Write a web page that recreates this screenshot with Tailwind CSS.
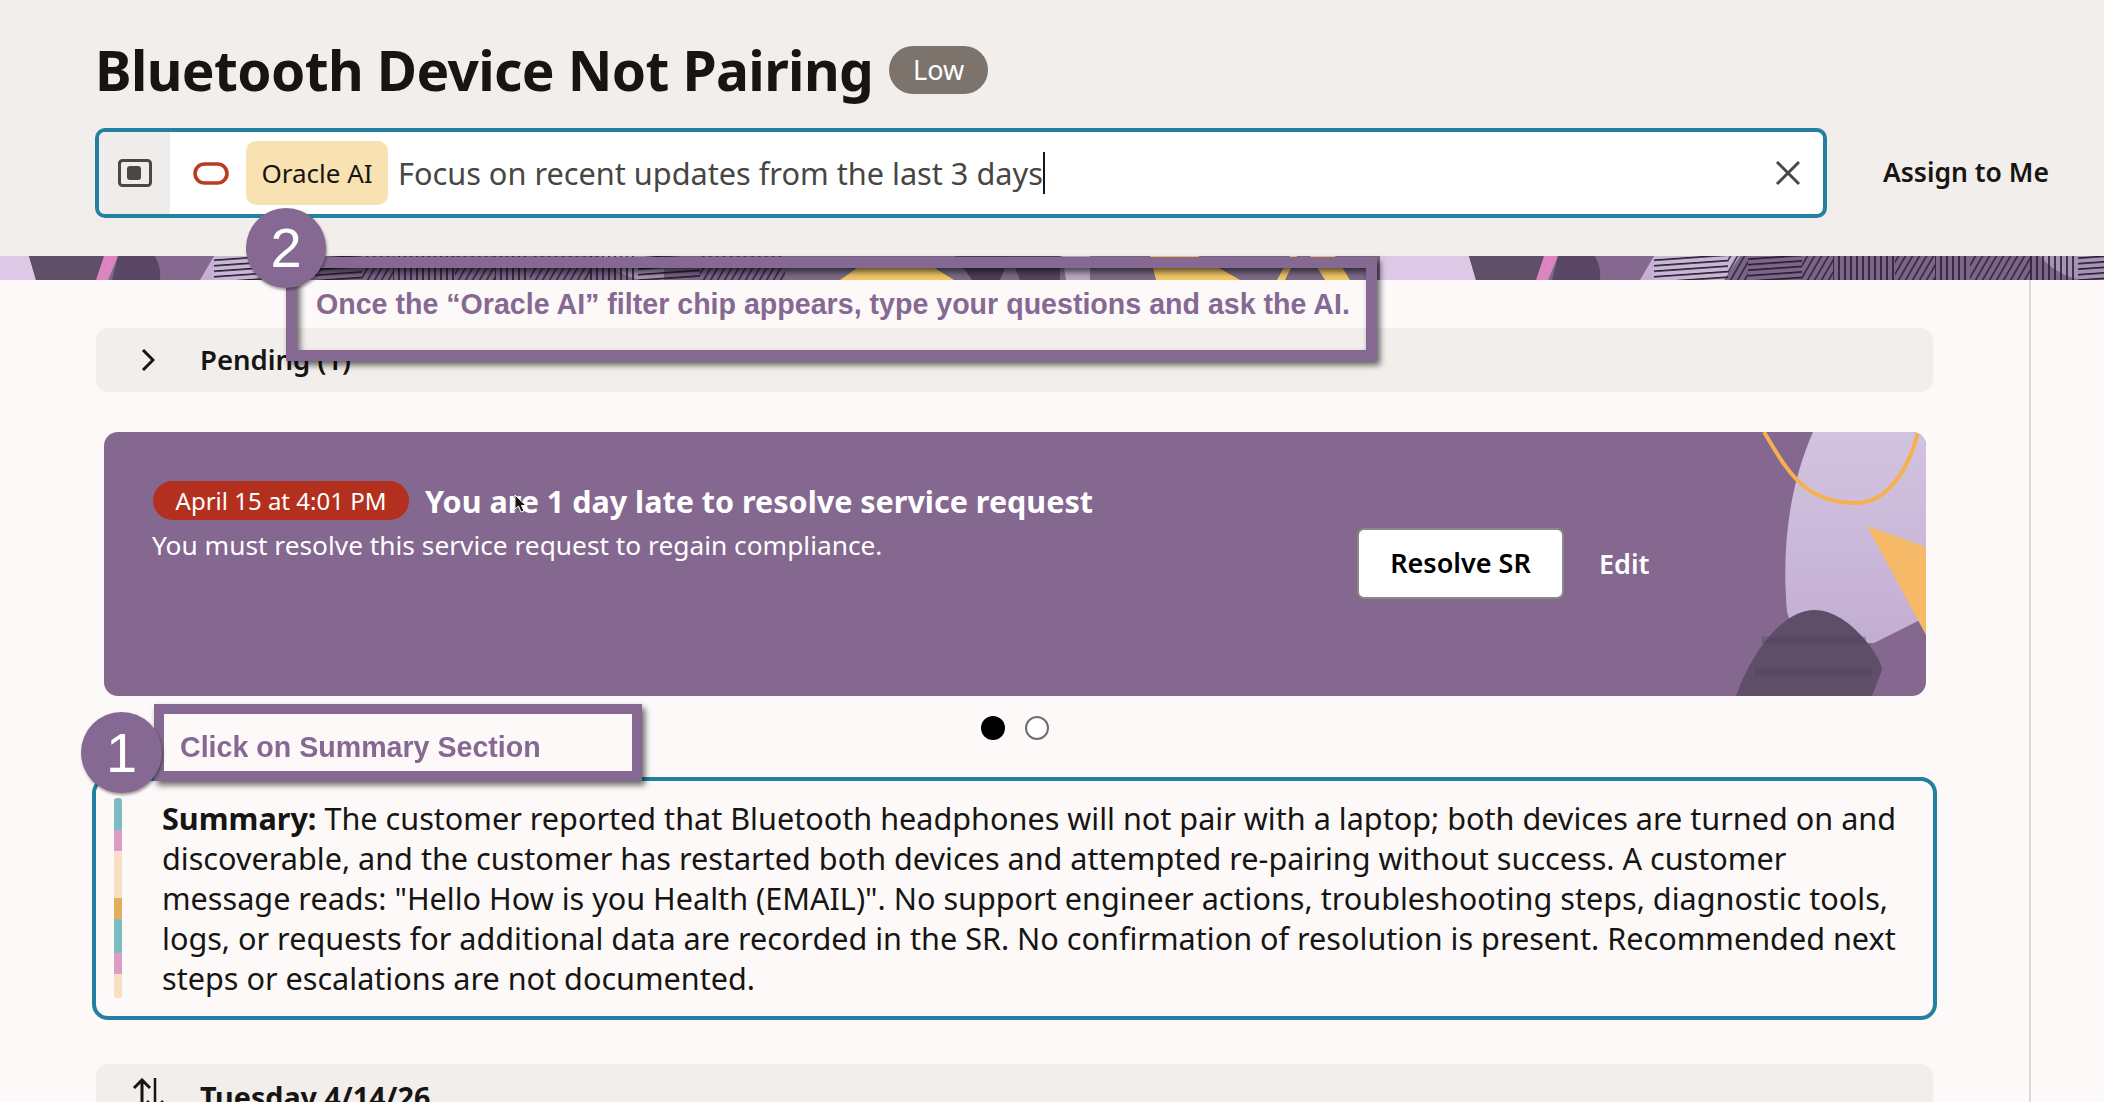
<!DOCTYPE html>
<html lang="en">
<head>
    <meta charset="UTF-8">
    <title>Bluetooth Device Not Pairing</title>
    <script src="https://cdn.jsdelivr.net/npm/@tailwindcss/browser@4"></script>
</head>
<body class="bg-[#fcf9f8] font-['Noto_Sans',sans-serif] text-[#161513]">
<div class="relative w-[2104px] h-[1102px] overflow-hidden">

    <!-- header -->
    <header class="h-[256px] bg-[#f1eeeb] px-[95px] pt-[46px]">
        <div class="flex items-center h-[48px]">
            <h1 class="text-[55px] leading-[48px] font-bold tracking-[-0.63px]">Bluetooth Device Not Pairing</h1>
            <span class="ml-[16px] w-[99px] h-[48px] rounded-[24px] bg-[#7b736c] text-white text-[27px] flex items-center justify-center">Low</span>
        </div>
        <div class="mt-[34px] flex items-center w-[1960px]">
            <div class="w-[1732px] h-[90px] shrink-0 border-[4px] border-[#24809f] rounded-[10px] bg-white flex items-center overflow-hidden">
                <div class="w-[71px] h-full bg-[#eeedeb] flex items-center justify-center">
                    <svg class="w-[34px] h-[28px]" viewBox="0 0 34 28"><rect x="1.5" y="1.5" width="31" height="25" rx="3" fill="none" stroke="#4a4845" stroke-width="3"/><rect x="9" y="7" width="14" height="14" rx="3" fill="#4a4845"/></svg>
                </div>
                <svg class="ml-[23px] w-[36px] h-[23px]" viewBox="0 0 36 23"><rect x="2" y="2" width="32" height="19" rx="9.5" fill="none" stroke="#b93b22" stroke-width="3.6"/></svg>
                <div class="ml-[17px] w-[142px] h-[64px] rounded-[10px] bg-[#f8e2b2] flex items-center justify-center text-[26px]">Oracle AI</div>
                <span class="ml-[10px] text-[30.7px] text-[#474644]">Focus on recent updates from the last 3 days</span>
                <span class="w-[2px] h-[42px] bg-[#161513]"></span>
                <svg class="ml-auto mr-[22px] w-[26px] h-[26px]" viewBox="0 0 26 26"><path d="M2 2 L24 24 M24 2 L2 24" stroke="#474644" stroke-width="3" fill="none"/></svg>
            </div>
            <button class="ml-[56px] text-[26.500px] font-semibold whitespace-nowrap">Assign to Me</button>
        </div>
    </header>

    <!-- decorative strip, the artwork repeats every 1440px -->
    <svg class="block w-[2104px] h-[24px]" viewBox="0 0 2104 24">
        <defs>
            <pattern id="horiz" width="60" height="5.500" patternUnits="userSpaceOnUse" patternTransform="rotate(-4)"><path d="M0 2.700H60" stroke="#241c2b" stroke-width="1.6"/></pattern>
            <pattern id="diag" width="7" height="24" patternUnits="userSpaceOnUse" patternTransform="skewX(-30)"><path d="M3.500 0V24" stroke="#241c2b" stroke-width="1.6"/></pattern>
            <pattern id="vert" width="6" height="24" patternUnits="userSpaceOnUse"><path d="M3 0V24" stroke="#241c2b" stroke-width="1.6"/></pattern>
            <g id="tile">
                <rect x="-60" width="1440" height="24" fill="#7c6a87"/>
                <path d="M-60 0H29L36 24H-60Z" fill="#ddc9e5"/>
                <path d="M29 0H118L100 24H36Z" fill="#5f4e68"/>
                <path d="M104 0H118L108 24H96Z" fill="#db84c0"/>
                <path d="M118 0H155Q162 12 160 24H112Z" fill="#5a4766"/>
                <path d="M155 0H216V24H160Q162 12 155 0Z" fill="#856890"/>
                <path d="M214 0V24H200Z" fill="#c5afd3"/>
                <rect x="214" width="571" height="24" fill="#7d6489"/>
                <path d="M214 0H300L284 24H214Z" fill="#c9b6d6"/>
                <path d="M600 0H664V24H640Q615 18 600 0Z" fill="#a892b6"/>
                <rect x="214" width="74" height="24" fill="url(#horiz)"/>
                <rect x="288" width="20" height="24" fill="url(#diag)"/>
                <rect x="308" width="54" height="24" fill="url(#horiz)"/>
                <rect x="362" width="31" height="24" fill="url(#diag)"/>
                <rect x="393" width="62" height="24" fill="url(#vert)"/>
                <rect x="455" width="40" height="24" fill="url(#diag)"/>
                <rect x="495" width="35" height="24" fill="url(#vert)"/>
                <rect x="530" width="60" height="24" fill="url(#diag)"/>
                <rect x="590" width="48" height="24" fill="url(#vert)"/>
                <rect x="638" width="62" height="24" fill="url(#horiz)"/>
                <rect x="700" width="85" height="24" fill="url(#diag)"/>
                <path d="M840 24L860 10H900L925 6L954 24Z" fill="#f2c767"/>
                <path d="M955 0H1010L1000 24H972Z" fill="#4e3e59"/>
                <path d="M1010 0H1060V24H1020Z" fill="#54445f"/>
                <path d="M1062 0H1090V24H1066Z" fill="#b9a8c4"/>
                <path d="M1150 0H1198L1240 24H1156Z" fill="#f2c767"/>
                <path d="M1277 24L1290 0H1297L1285 24Z" fill="#f2c767"/>
                <path d="M1310 0H1335L1350 24H1325Z" fill="#f2c767"/>
            </g>
        </defs>
        <use href="#tile"/>
        <use href="#tile" x="1440"/>
    </svg>

    <!-- main column -->
    <main class="w-[2031px] h-[822px] border-r-2 border-[#dcdad8] pl-[96px] pr-[96px] pt-[48px] overflow-hidden">
        <div class="h-[64px] rounded-[12px] bg-[#f1eeeb] flex items-center">
            <svg class="ml-[45px] w-[14px] h-[22px]" viewBox="0 0 14 22"><path d="M2 1 L12 11 L2 21" fill="none" stroke="#161513" stroke-width="3"/></svg>
            <span class="ml-[45px] text-[27.500px] font-semibold">Pending (1)</span>
        </div>

        <!-- compliance card -->
        <section class="relative mt-[40px] ml-[8px] mr-[7px] h-[264px] rounded-[14px] bg-[#856890] overflow-hidden text-white">
            <svg class="absolute right-0 top-0 w-[190px] h-[264px]" viewBox="0 0 190 264">
                <defs>
                    <linearGradient id="lav" x1="0" y1="0" x2="0" y2="1"><stop offset="0" stop-color="#d2c3df"/><stop offset="0.5" stop-color="#cbb9d9"/><stop offset="1" stop-color="#c2aed2"/></linearGradient>
                </defs>
                <path d="M77 0C55 50 45 110 51 180L61 211L138 211L190 185V0Z" fill="url(#lav)"/>
                <path d="M131 94L190 115V203Z" fill="#f6b968"/>
                <path d="M0 264C10 235 40 178 79 178C112 178 146 225 146 238L136 264Z" fill="#5f4e68"/>
                <path d="M26 208H130M18 240H136" stroke="#4f3f5a" stroke-width="7" opacity="0.35"/>
                <path d="M28 0C50 36 66 71 120 71C150 71 172 40 182 0" fill="none" stroke="#f6b14f" stroke-width="4"/>
            </svg>
            <div class="relative flex items-center pl-[49px] pt-[45px]">
                <span class="w-[256px] h-[39px] rounded-full bg-[#b3301e] flex items-center justify-center text-[24px]">April 15 at 4:01 PM</span>
                <span class="ml-[16px] mt-[2px] text-[30.500px] font-bold">You are 1 day late to resolve service request</span>
            </div>
            <p class="relative pl-[48px] mt-[1px] text-[26.300px]">You must resolve this service request to regain compliance.</p>
            <button class="absolute left-[1253px] top-[96px] w-[207px] h-[71px] rounded-[7px] border-2 border-[#8a8a80] bg-white text-black text-[27px] font-semibold">Resolve SR</button>
            <span class="absolute left-[1495px] top-[112px] text-[27px] font-semibold">Edit</span>
        </section>

        <!-- carousel dots -->
        <div class="mt-[20px] flex justify-center gap-[20px] pl-[1px]">
            <span class="w-[24px] h-[24px] rounded-full bg-black"></span>
            <span class="w-[24px] h-[24px] rounded-full border-2 border-[#6f6e6c] bg-white"></span>
        </div>

        <!-- summary -->
        <section class="mt-[37px] -mx-[4px] h-[243px] border-[4px] border-[#24809f] rounded-[16px] flex pl-[18px] pt-[17px]">
            <div class="w-[8px] h-[200px] rounded-[3px] overflow-hidden flex flex-col shrink-0">
                <i class="block h-[32px] bg-[#7dbcc0]"></i>
                <i class="block h-[21px] bg-[#dc9cc4]"></i>
                <i class="block h-[47px] bg-[#f8dfc4]"></i>
                <i class="block h-[21px] bg-[#e2ad5d]"></i>
                <i class="block h-[34px] bg-[#7dbcc0]"></i>
                <i class="block h-[21px] bg-[#dc9cc4]"></i>
                <i class="block h-[24px] bg-[#f8dfc4]"></i>
            </div>
            <p class="ml-[40px] w-[1750px] text-[30.600px] leading-[40px]"><b class="font-bold">Summary:</b> The customer reported that Bluetooth headphones will not pair with a laptop; both devices are turned on and discoverable, and the customer has restarted both devices and attempted re-pairing without success. A customer message reads: "Hello How is you Health (EMAIL)". No support engineer actions, troubleshooting steps, diagnostic tools, logs, or requests for additional data are recorded in the SR. No confirmation of resolution is present. Recommended next steps or escalations are not documented.</p>
        </section>

        <div class="mt-[44px] h-[64px] rounded-[12px] bg-[#f1eeeb] flex items-start">
            <svg class="ml-[36px] mt-[14px] w-[34px] h-[30px]" viewBox="0 0 34 30"><path d="M10 30V3 M2 10 L10 2 L18 10" fill="none" stroke="#161513" stroke-width="3"/><path d="M23 0V30 M15 23 L23 31 L31 23" fill="none" stroke="#161513" stroke-width="2.5"/></svg>
            <span class="ml-[34px] mt-[11px] text-[28.700px] font-bold">Tuesday 4/14/26</span>
        </div>
    </main>

    <!-- annotation 2 -->
    <div class="absolute left-[286px] top-[257px] w-[1091px] h-[104px] border-[11px] border-[#866993] drop-shadow-[3px_4px_3px_rgba(0,0,0,0.6)]"></div>
    <p class="absolute left-[316px] top-[283px] font-['Liberation_Sans',sans-serif] font-bold text-[28.600px] text-[#866993] whitespace-nowrap">Once the “Oracle AI” filter chip appears, type your questions and ask the AI.</p>
    <div class="absolute left-[246px] top-[208px] w-[80px] h-[80px] rounded-full bg-[#866993] shadow-[1px_2px_3px_rgba(0,0,0,0.4)] flex items-center justify-center text-white text-[56px] font-['Liberation_Sans',sans-serif]">2</div>

    <!-- annotation 1 -->
    <div class="absolute left-[154px] top-[704px] w-[488px] h-[77px] border-[10px] border-[#866993] bg-[#fcf9f8] drop-shadow-[3px_4px_3px_rgba(0,0,0,0.6)] pl-[16px] pt-[12px] font-['Liberation_Sans',sans-serif] font-bold text-[28.600px] text-[#866993] whitespace-nowrap">Click on Summary Section</div>
    <div class="absolute left-[81px] top-[712px] w-[81px] h-[81px] rounded-full bg-[#866993] shadow-[1px_2px_3px_rgba(0,0,0,0.4)] flex items-center justify-center text-white text-[56px] font-['Liberation_Sans',sans-serif]">1</div>

    <!-- mouse pointer -->
    <svg class="absolute left-[514px] top-[494px] w-[14px] h-[20px]" viewBox="0 0 14 20"><path d="M1 1V15L4.500 12L7 18L10 17L7.500 11.500H12Z" fill="#161513" stroke="#fff" stroke-width="1"/></svg>
</div>
</body>
</html>
